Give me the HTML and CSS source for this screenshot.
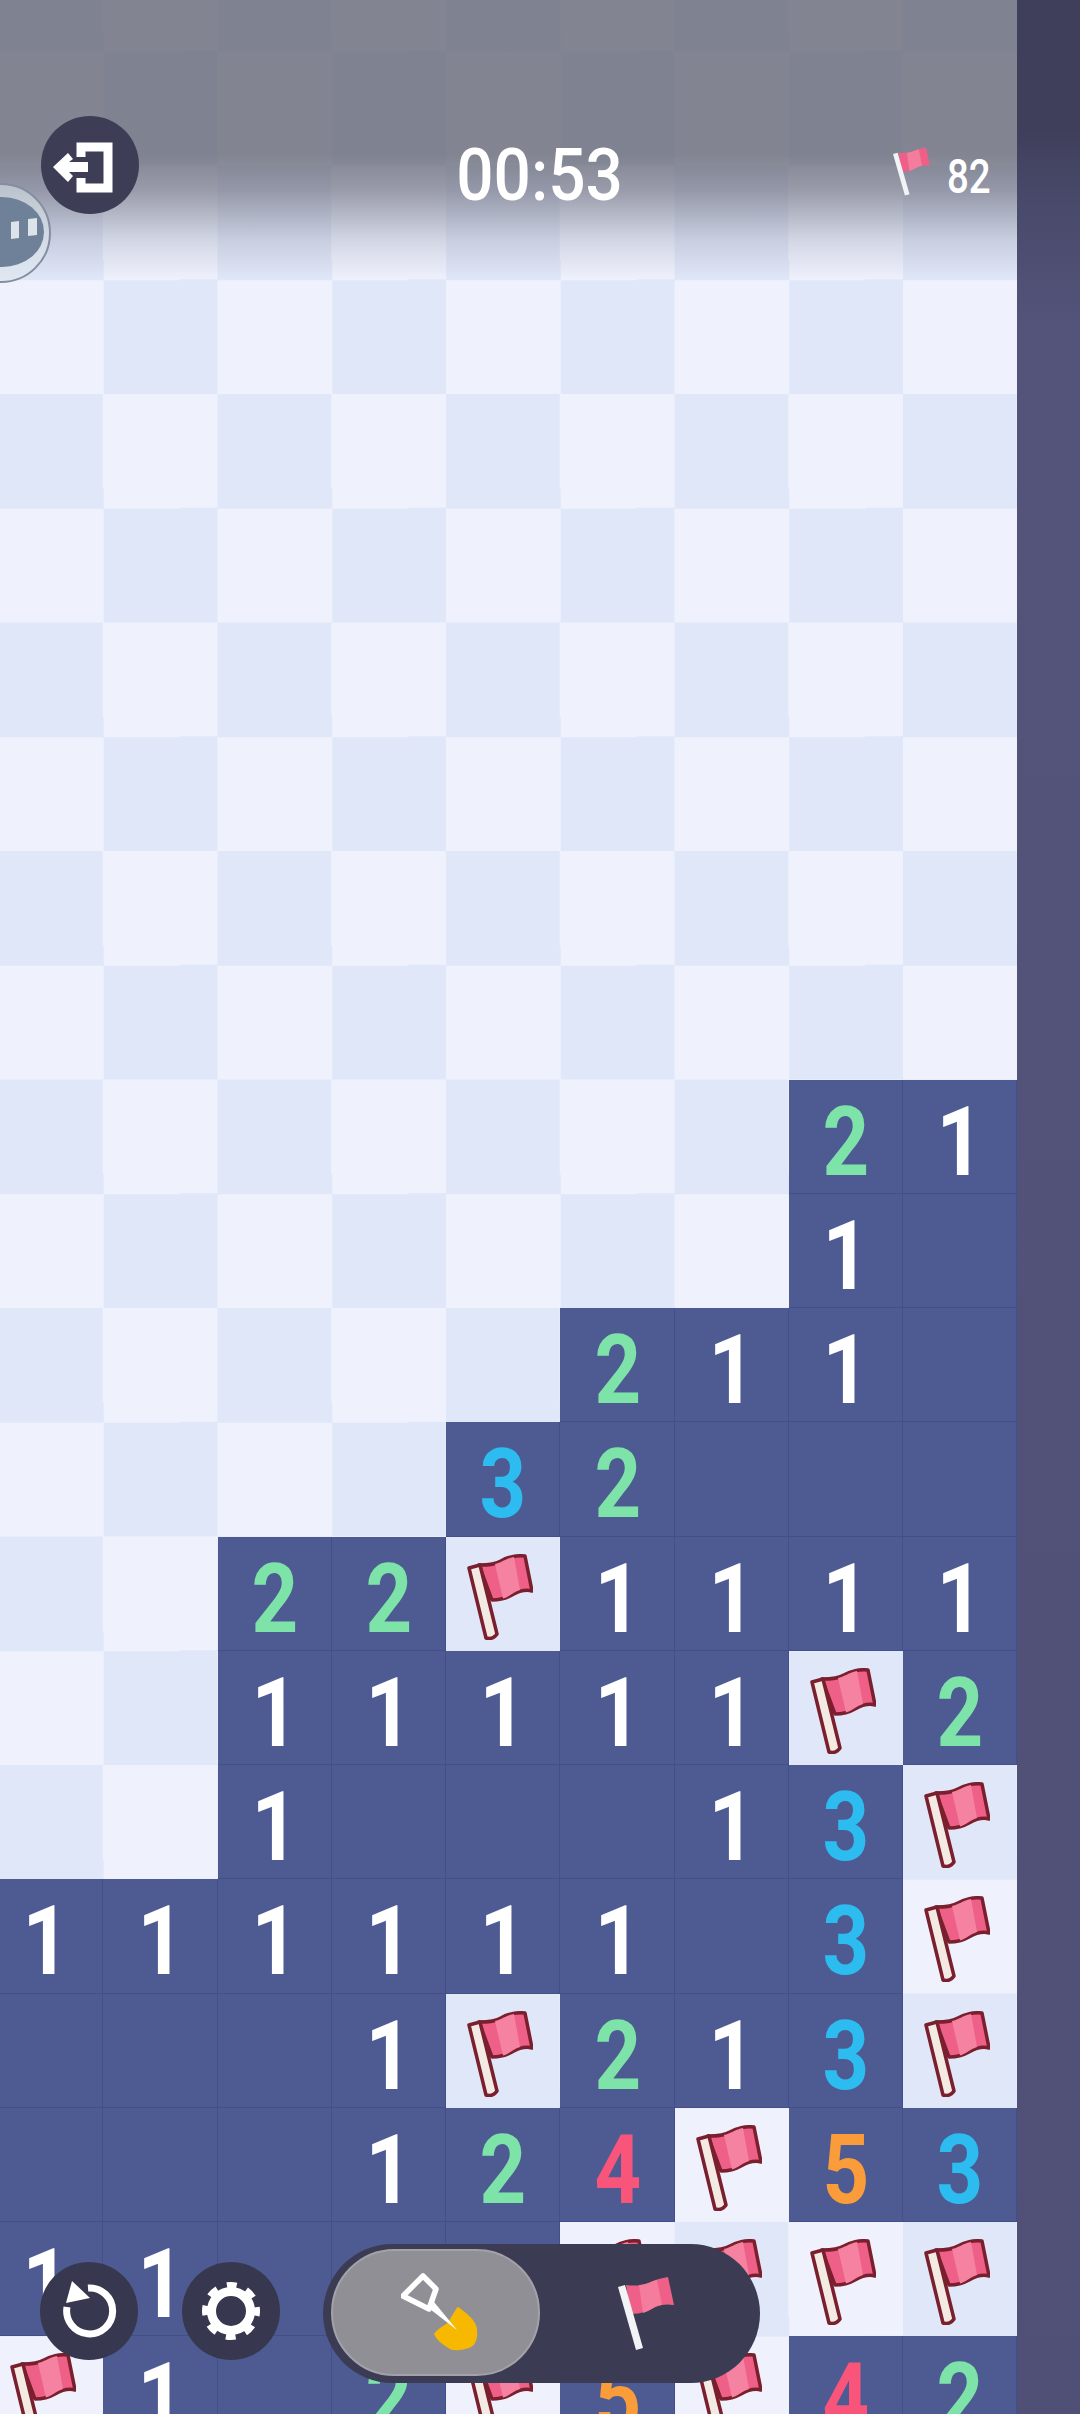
FILE: index.html
```html
<!DOCTYPE html>
<html lang="en">
  <head>
    <meta charset="UTF-8" />
    <title>Minesweeper</title>
    <link rel="stylesheet" href="styles.css">
  </head>
  <body>
    <svg class="defs" width="0" height="0">
      <symbol id="flag" viewBox="0 0 66 86">
        <path d="M12 11 C20 11 28 11 34 7 C40 3 50 1 58 2 L65 37 C58 35 52 37 45 41 C38 45 32 46 25 46 Z" fill="#ee6088" stroke="#7a1f2e" stroke-width="3.5" stroke-linejoin="round" />
        <path d="M28 10 C34 9 38 5 47 3 L53 36 C46 38 42 43 36 44.5 Z" fill="#f682a1" />
        <path d="M2 14 L13 11 L30 80 Q26 86 19 84 Z" fill="#f3ebe3" stroke="#7a1f2e" stroke-width="3.5" stroke-linejoin="round" />
      </symbol>
      <symbol id="miniflag" viewBox="0 0 56 73">
        <path d="M8 8 C15 9 23 9 30 6 C36 3 44 1 50 0 L56 28 C50 27 44 27 37 30 C31 34 23 37 13 37 Z" fill="#ee6088" />
        <path d="M21 8 C28 8 34 4 39 3 L44 28 C40 28 35 31 30 34 L25 36 Z" fill="#f47c9c" />
        <path d="M0 10 L7 8 L25 71 L18 73 Z" fill="#f2f3f7" />
      </symbol>
    </svg>

    <div class="page">
      <div class="board">
        <!-- row 10 -->
        <div class="cell"></div><div class="cell"></div><div class="cell"></div><div class="cell"></div><div class="cell"></div><div class="cell"></div><div class="cell"></div>
        <div class="cell open n2"><span>2</span></div><div class="cell open n1"><span>1</span></div>
        <!-- row 11 -->
        <div class="cell"></div><div class="cell"></div><div class="cell"></div><div class="cell"></div><div class="cell"></div><div class="cell"></div><div class="cell"></div>
        <div class="cell open n1"><span>1</span></div><div class="cell open"></div>
        <!-- row 12 -->
        <div class="cell"></div><div class="cell"></div><div class="cell"></div><div class="cell"></div><div class="cell"></div>
        <div class="cell open n2"><span>2</span></div><div class="cell open n1"><span>1</span></div><div class="cell open n1"><span>1</span></div><div class="cell open"></div>
        <!-- row 13 -->
        <div class="cell"></div><div class="cell"></div><div class="cell"></div><div class="cell"></div>
        <div class="cell open n3"><span>3</span></div><div class="cell open n2"><span>2</span></div><div class="cell open"></div><div class="cell open"></div><div class="cell open"></div>
        <!-- row 14 -->
        <div class="cell"></div><div class="cell"></div>
        <div class="cell open n2"><span>2</span></div><div class="cell open n2"><span>2</span></div>
        <div class="cell"><svg class="flag"><use href="#flag" /></svg></div>
        <div class="cell open n1"><span>1</span></div><div class="cell open n1"><span>1</span></div><div class="cell open n1"><span>1</span></div><div class="cell open n1"><span>1</span></div>
        <!-- row 15 -->
        <div class="cell"></div><div class="cell"></div>
        <div class="cell open n1"><span>1</span></div><div class="cell open n1"><span>1</span></div><div class="cell open n1"><span>1</span></div><div class="cell open n1"><span>1</span></div><div class="cell open n1"><span>1</span></div>
        <div class="cell"><svg class="flag"><use href="#flag" /></svg></div>
        <div class="cell open n2"><span>2</span></div>
        <!-- row 16 -->
        <div class="cell"></div><div class="cell"></div>
        <div class="cell open n1"><span>1</span></div><div class="cell open"></div><div class="cell open"></div><div class="cell open"></div>
        <div class="cell open n1"><span>1</span></div><div class="cell open n3"><span>3</span></div>
        <div class="cell"><svg class="flag"><use href="#flag" /></svg></div>
        <!-- row 17 -->
        <div class="cell open n1"><span>1</span></div><div class="cell open n1"><span>1</span></div><div class="cell open n1"><span>1</span></div><div class="cell open n1"><span>1</span></div><div class="cell open n1"><span>1</span></div><div class="cell open n1"><span>1</span></div>
        <div class="cell open"></div><div class="cell open n3"><span>3</span></div>
        <div class="cell"><svg class="flag"><use href="#flag" /></svg></div>
        <!-- row 18 -->
        <div class="cell open"></div><div class="cell open"></div><div class="cell open"></div>
        <div class="cell open n1"><span>1</span></div>
        <div class="cell"><svg class="flag"><use href="#flag" /></svg></div>
        <div class="cell open n2"><span>2</span></div><div class="cell open n1"><span>1</span></div><div class="cell open n3"><span>3</span></div>
        <div class="cell"><svg class="flag"><use href="#flag" /></svg></div>
        <!-- row 19 -->
        <div class="cell open"></div><div class="cell open"></div><div class="cell open"></div>
        <div class="cell open n1"><span>1</span></div><div class="cell open n2"><span>2</span></div><div class="cell open n4"><span>4</span></div>
        <div class="cell"><svg class="flag"><use href="#flag" /></svg></div>
        <div class="cell open n5"><span>5</span></div><div class="cell open n3"><span>3</span></div>
        <!-- row 20 -->
        <div class="cell open n1"><span>1</span></div><div class="cell open n1"><span>1</span></div><div class="cell open"></div><div class="cell open"></div><div class="cell open"></div>
        <div class="cell"><svg class="flag"><use href="#flag" /></svg></div>
        <div class="cell"><svg class="flag"><use href="#flag" /></svg></div>
        <div class="cell"><svg class="flag"><use href="#flag" /></svg></div>
        <div class="cell"><svg class="flag"><use href="#flag" /></svg></div>
        <!-- row 21 -->
        <div class="cell"><svg class="flag"><use href="#flag" /></svg></div>
        <div class="cell open n1"><span>1</span></div><div class="cell open"></div><div class="cell open n2"><span>2</span></div>
        <div class="cell"><svg class="flag"><use href="#flag" /></svg></div>
        <div class="cell open n5"><span>5</span></div>
        <div class="cell"><svg class="flag"><use href="#flag" /></svg></div>
        <div class="cell open n4"><span>4</span></div><div class="cell open n2"><span>2</span></div>
      </div>
      <div class="side"></div>

      <div class="shade"></div>

      <svg class="bubble" width="52" height="104" viewBox="0 0 52 104">
        <circle cx="1" cy="52" r="49" fill="#dfe9ec" fill-opacity="0.55" stroke="#858da0" stroke-width="2" />
        <ellipse cx="2" cy="51" rx="42" ry="35" fill="#6f8099" />
        <path d="M11 41 L19 40 L19 57 L11 58 Z M28 38 L37 37 L37 54 L28 55 Z" fill="#dde4e9" />
      </svg>

      <div class="header">
        <button class="round round-top">
          <svg width="98" height="98" viewBox="0 0 98 98">
            <path d="M40 41 V31 H67 V72 H40 V62" fill="none" stroke="#fff" stroke-width="9" />
            <path d="M12 51 L27 37 L32 43 L28 46 H47 V56 H28 L32 60 L27 66 Z" fill="#fff" />
          </svg>
        </button>
        <div class="timer"><span>00:53</span></div>
        <div class="count">
          <svg class="count-flag"><use href="#miniflag" /></svg>
          <span>82</span>
        </div>
      </div>

      <div class="controls">
        <button class="round">
          <svg width="98" height="98" viewBox="0 0 98 98">
            <path d="M48 26 A23 23 0 1 1 27 45" fill="none" stroke="#fff" stroke-width="7" />
            <path d="M32 19 L50 36 L26 41 Z" fill="#fff" />
          </svg>
        </button>
        <button class="round">
          <svg width="98" height="98" viewBox="0 0 98 98">
            <circle cx="49" cy="49" r="19.5" fill="none" stroke="#fff" stroke-width="9" />
            <circle cx="49" cy="49" r="26" fill="none" stroke="#fff" stroke-width="6" stroke-dasharray="10 10.42" stroke-dashoffset="5" />
          </svg>
        </button>
        <div class="toggle">
          <div class="mode-active">
            <svg class="shovel" width="80" height="82" viewBox="0 0 80 82">
              <path d="M57 37 C65 43 74 50 75 58 C76 66 74 72 70 75 C62 78 54 79 49 77 C42 73 36 68 34 63 C38 58 44 55 47 53 Z" fill="#f6b900" stroke="#f6b900" stroke-width="2" stroke-linejoin="round" />
              <path d="M22 5 L35 18 L28 38 L2 25 Z" fill="none" stroke="#fff" stroke-width="5.5" stroke-linejoin="round" />
              <path d="M25 35 L33 31 L56 59 Z" fill="#fff" />
            </svg>
          </div>
          <div class="mode-other">
            <svg class="toggle-flag"><use href="#miniflag" /></svg>
          </div>
        </div>
      </div>
    </div>
  </body>
</html>
```

FILE: styles.css
```css
html,
body {
  margin: 0;
  padding: 0;
}
body {
  font-family: Roboto, "Liberation Sans", sans-serif;
  background-color: #56557a;
}
.defs {
  position: absolute;
}
.page {
  position: relative;
  display: flex;
  align-items: flex-start;
  width: 1080px;
  height: 2414px;
  overflow: hidden;
}

/* board: the untouched rows are only the checker background */
.board {
  flex: none;
  display: grid;
  grid-template-columns: repeat(9, 114.25px);
  grid-auto-rows: 114.25px;
  width: 1028.25px;
  height: 2513.5px;
  margin: -63px 0 0 -11px;
  padding-top: 1142.5px;
  box-sizing: border-box;
  background: repeating-conic-gradient(#eff2fd 0 25%, #e0e7f8 0 50%) 0 0 / 228.5px 228.5px;
}
.cell {
  display: flex;
  align-items: center;
  justify-content: center;
  min-width: 0;
}
.open {
  background-color: #4e5b92;
  box-shadow: inset -1px -1px 0 #434f8a;
}
.open span {
  display: block;
  margin-top: 10px;
  font-size: 97px;
  line-height: 90px;
  font-weight: 700;
  transform: scaleX(0.84);
}
.n1 { color: #ffffff; }
.n2 { color: #7de3a9; }
.n3 { color: #2cbcf0; }
.n4 { color: #f9557a; }
.n5 { color: #fb9c3b; }
.flag {
  width: 66px;
  height: 86px;
  margin: 6px 6px 0 0;
}
.side {
  flex: 1;
  align-self: stretch;
  background: linear-gradient(#3f3f5c 0, #3f3f5c 130px, #4a4a6c 210px, #54537a 330px, #504f75 100%);
}

/* overlays */
.shade {
  position: absolute;
  top: 0;
  left: 0;
  width: 1017px;
  height: 280px;
  background: linear-gradient(
    rgba(100, 102, 115, 0.78) 0,
    rgba(100, 102, 115, 0.78) 155px,
    rgba(112, 114, 130, 0.68) 190px,
    rgba(150, 154, 175, 0.32) 240px,
    rgba(180, 185, 210, 0) 280px
  );
}
.bubble {
  position: absolute;
  top: 181px;
  left: 0;
}
.header {
  position: absolute;
  top: 116px;
  left: 41px;
  right: 41px;
  display: grid;
  grid-template-columns: 1fr auto 1fr;
  align-items: center;
  color: #ffffff;
}
.round {
  display: block;
  width: 98px;
  height: 98px;
  padding: 0;
  border: none;
  border-radius: 50%;
  background-color: #37384f;
}
.round svg {
  display: block;
}
.round-top {
  background-color: #3d3e56;
}
.timer {
  margin-top: 20px;
  font-size: 73px;
  line-height: 1;
  font-weight: 500;
}
.timer span {
  display: block;
  transform: scaleX(0.9);
}
.count {
  justify-self: end;
  display: flex;
  align-items: center;
  gap: 17px;
  margin: 18px 49px 0 0;
  font-size: 48px;
  line-height: 1;
  font-weight: 500;
}
.count span {
  display: block;
  width: 43px;
  margin-top: 6px;
  transform: scaleX(0.8);
  transform-origin: left center;
}
.count-flag {
  width: 37px;
  height: 51px;
  margin-top: -6px;
}
.controls {
  position: absolute;
  top: 2244px;
  left: 40px;
  display: flex;
  align-items: center;
  height: 139px;
}
.controls .round {
  margin: -6px 44px 0 0;
}
.controls .round + .round {
  margin-right: 43px;
}
.toggle {
  display: flex;
  align-items: center;
  width: 437px;
  height: 139px;
  border-radius: 70px;
  background-color: #3b3c54;
}
.mode-active {
  display: flex;
  align-items: center;
  justify-content: center;
  flex: none;
  width: 205px;
  height: 123px;
  margin-left: 8px;
  margin-bottom: 3px;
  border: 2px solid #a2a2a8;
  border-radius: 64px;
  background-color: #908f96;
}
.shovel {
  margin-left: 10px;
}
.mode-other {
  flex: 1;
  display: flex;
  justify-content: center;
  padding-right: 8px;
}
.toggle-flag {
  width: 56px;
  height: 73px;
}
```
